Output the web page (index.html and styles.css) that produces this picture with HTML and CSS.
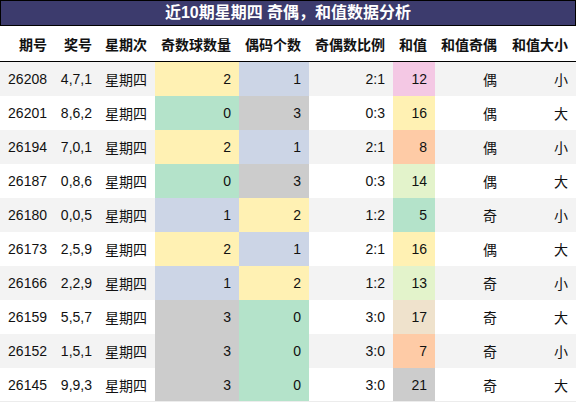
FILE: index.html
```html
<!DOCTYPE html>
<html lang="zh">
<head>
<meta charset="utf-8">
<link rel="stylesheet" href="styles.css">
</head>
<body>
<div class="title">近10期星期四 奇偶，和值数据分析</div>
<table class="grid">
<colgroup>
<col class="w55"><col class="w45"><col class="w55"><col class="w84"><col class="w70"><col class="w84"><col class="w42"><col class="w70"><col class="w71">
</colgroup>
<thead>
<tr><th>期号</th><th>奖号</th><th>星期次</th><th>奇数球数量</th><th>偶码个数</th><th>奇偶数比例</th><th>和值</th><th>和值奇偶</th><th>和值大小</th></tr>
</thead>
<tbody>
<tr class="alt"><td>26208</td><td>4,7,1</td><td>星期四</td><td class="c-yellow">2</td><td class="c-blue">1</td><td>2:1</td><td class="c-pink">12</td><td>偶</td><td>小</td></tr>
<tr><td>26201</td><td>8,6,2</td><td>星期四</td><td class="c-green">0</td><td class="c-gray">3</td><td>0:3</td><td class="c-yellow">16</td><td>偶</td><td>大</td></tr>
<tr class="alt"><td>26194</td><td>7,0,1</td><td>星期四</td><td class="c-yellow">2</td><td class="c-blue">1</td><td>2:1</td><td class="c-orange">8</td><td>偶</td><td>小</td></tr>
<tr><td>26187</td><td>0,8,6</td><td>星期四</td><td class="c-green">0</td><td class="c-gray">3</td><td>0:3</td><td class="c-lime">14</td><td>偶</td><td>大</td></tr>
<tr class="alt"><td>26180</td><td>0,0,5</td><td>星期四</td><td class="c-blue">1</td><td class="c-yellow">2</td><td>1:2</td><td class="c-green">5</td><td>奇</td><td>小</td></tr>
<tr><td>26173</td><td>2,5,9</td><td>星期四</td><td class="c-yellow">2</td><td class="c-blue">1</td><td>2:1</td><td class="c-yellow">16</td><td>偶</td><td>大</td></tr>
<tr class="alt"><td>26166</td><td>2,2,9</td><td>星期四</td><td class="c-blue">1</td><td class="c-yellow">2</td><td>1:2</td><td class="c-lime">13</td><td>奇</td><td>小</td></tr>
<tr><td>26159</td><td>5,5,7</td><td>星期四</td><td class="c-gray">3</td><td class="c-green">0</td><td>3:0</td><td class="c-beige">17</td><td>奇</td><td>大</td></tr>
<tr class="alt"><td>26152</td><td>1,5,1</td><td>星期四</td><td class="c-gray">3</td><td class="c-green">0</td><td>3:0</td><td class="c-orange">7</td><td>奇</td><td>小</td></tr>
<tr><td>26145</td><td>9,9,3</td><td>星期四</td><td class="c-gray">3</td><td class="c-green">0</td><td>3:0</td><td class="c-gray">21</td><td>奇</td><td>大</td></tr>
</tbody>
</table>
</body>
</html>
```

FILE: styles.css
```css
html, body {
  margin: 0;
  padding: 0;
  background: #ffffff;
}
body {
  width: 576px;
  font-family: "Liberation Sans", "Noto Sans CJK SC", sans-serif;
  color: #111;
}
.title {
  height: 24px;
  line-height: 24px;
  border: 1px solid #000;
  background: #3c3b6d;
  color: #fff;
  font-weight: bold;
  font-size: 16px;
  text-align: center;
}
.grid {
  width: 576px;
  border-collapse: collapse;
  table-layout: fixed;
  font-size: 14px;
}
.w55 { width: 55px; }
.w45 { width: 45px; }
.w84 { width: 84px; }
.w70 { width: 70px; }
.w42 { width: 42px; }
.w71 { width: 71px; }
.grid th, .grid td {
  padding: 0 8px 0 0;
  text-align: right;
  white-space: nowrap;
  overflow: hidden;
}
.grid th {
  height: 35px;
  font-weight: bold;
  border-bottom: 1px solid #000;
  color: #111;
}
.grid td {
  height: 34px;
}
.grid tbody tr { background: #ffffff; }
.grid tbody tr.alt { background: #f3f3f3; }
.grid tbody tr:last-child td { border-bottom: 1px solid #ececec; height: 33px; }
.grid td.c-yellow { background: #fff1b3; }
.grid td.c-blue { background: #ccd5e6; }
.grid td.c-green { background: #b4e3ca; }
.grid td.c-gray { background: #cccccc; }
.grid td.c-pink { background: #f4c8e4; }
.grid td.c-orange { background: #fecba6; }
.grid td.c-lime { background: #e3f3cb; }
.grid td.c-beige { background: #efe2cc; }
```
